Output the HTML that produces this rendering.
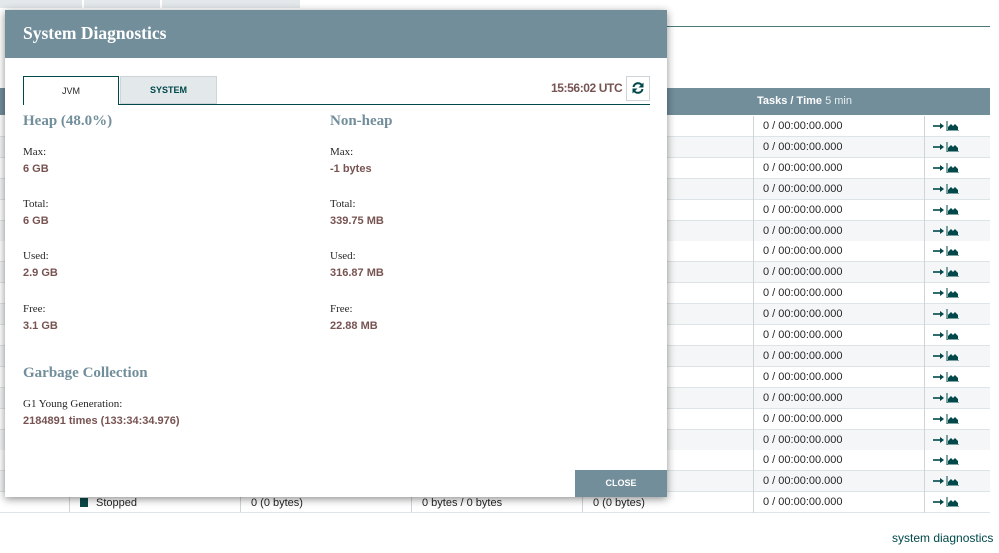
<!DOCTYPE html>
<html><head><style>
*{margin:0;padding:0;box-sizing:border-box}
body{width:999px;height:553px;overflow:hidden;background:#fff;font-family:"Liberation Sans",sans-serif;position:relative}
.abs{position:absolute}
.row{position:absolute;left:0;width:990px;height:21px;border-bottom:1px solid #dde4e7;font-size:11px;color:#262626}
.row span{position:absolute;top:4px}
.row .c{position:absolute;top:0;height:21px;border-left:1px solid #cdd5d9}
.lab{position:absolute;font-family:"Liberation Serif",serif;font-size:11px;color:#262626}
.val{position:absolute;font-size:11px;font-weight:bold;color:#775351}
.h{position:absolute;font-family:"Liberation Serif",serif;font-weight:bold;font-size:15px;color:#728e9b}
.ic{position:absolute;width:26px;height:10px}
</style></head><body>
<div class="abs" style="left:0;top:0;width:300px;height:8px;background:#e3e8eb"></div>
<div class="abs" style="left:82px;top:0;width:2px;height:8px;background:#fff"></div>
<div class="abs" style="left:160px;top:0;width:2px;height:8px;background:#fff"></div>
<div class="abs" style="left:300px;top:26px;width:690px;height:1px;background:#4b7a7d"></div>
<div class="abs" style="left:0;top:88px;width:990px;height:27px;background:#728e9b"></div>
<div class="abs" style="left:757px;top:95px;font-size:11px;color:#fff;font-weight:bold">Tasks / Time <span style="font-weight:normal;color:#e8eef0">5 min</span></div>
<div id="rows"></div>
<script>
var h='';for(var i=0;i<19;i++){var y=116+i*20.9;var bg=i%2?'#f4f6f7':'#fff';
h+='<div class="row" style="top:'+y+'px;background:'+bg+'"><div class="c" style="left:753px"></div><div class="c" style="left:924px"></div><span style="left:763px">0 / 00:00:00.000</span>'+
'<svg class="ic" style="left:933px;top:5px" viewBox="0 0 26 10"><path d="M0 5h8" stroke="#004849" stroke-width="1.6"/><path d="M7 2l4 3-4 3z" fill="#004849"/><path d="M14 0v10h12" stroke="#004849" stroke-width="1" fill="none"/><path d="M15 9V6l3-3 2 2 2-2 3 3v3z" fill="#004849"/></svg></div>';}
document.getElementById('rows').innerHTML=h;
</script>
<div class="abs" style="left:0;top:492px;width:753px;height:20px;background:#fff;font-size:11px;color:#262626">
<div class="abs" style="left:69px;top:0;height:20px;border-left:1px solid #cdd5d9"></div>
<div class="abs" style="left:80px;top:6px;width:8px;height:9px;background:#0b4a4a"></div>
<span class="abs" style="left:96px;top:5px">Stopped</span>
<div class="abs" style="left:240px;top:0;height:20px;border-left:1px solid #cdd5d9"></div>
<span class="abs" style="left:251px;top:5px">0 (0 bytes)</span>
<div class="abs" style="left:411px;top:0;height:20px;border-left:1px solid #cdd5d9"></div>
<span class="abs" style="left:422px;top:5px">0 bytes / 0 bytes</span>
<div class="abs" style="left:582px;top:0;height:20px;border-left:1px solid #cdd5d9"></div>
<span class="abs" style="left:593px;top:5px">0 (0 bytes)</span>
</div>
<div class="abs" style="left:892px;top:531px;font-size:12px;color:#004849">system diagnostics</div>

<div class="abs" style="left:5px;top:10px;width:662px;height:487px;background:#fff;box-shadow:0 2px 8px rgba(0,0,0,.45)">
<div class="abs" style="left:0;top:0;width:662px;height:48px;background:#728e9b"></div>
<div class="abs" style="left:18px;top:13px;font-family:'Liberation Serif',serif;font-weight:bold;font-size:17.5px;color:#fff">System Diagnostics</div>
<div class="abs" style="left:18px;top:66px;width:96px;height:29px;border:1px solid #004849;border-bottom:none;background:#fff;font-size:9px;color:#262626;text-align:center;line-height:28px">JVM</div>
<div class="abs" style="left:115px;top:66px;width:97px;height:28px;border:1px solid #cdd5d9;background:#e3e8eb;font-size:9px;color:#004849;text-align:center;line-height:27px;font-weight:bold">SYSTEM</div>
<div class="abs" style="left:113px;top:94px;width:532px;height:1px;background:#004849"></div>
<div class="abs" style="left:546px;top:71px;font-size:12px;font-weight:bold;color:#775351;letter-spacing:-0.4px">15:56:02 UTC</div>
<div class="abs" style="left:621px;top:66px;width:24px;height:25px;border:1px solid #cdd5d9;background:#fff"></div>
<svg class="abs" style="left:626px;top:71px" width="14" height="14" viewBox="0 0 14 14"><path d="M2.5 6A4.6 4.6 0 0 1 11 4.5" stroke="#004849" stroke-width="2" fill="none"/><path d="M12.5 1.5v5h-5z" fill="#004849"/><path d="M11.5 8A4.6 4.6 0 0 1 3 9.5" stroke="#004849" stroke-width="2" fill="none"/><path d="M1.5 12.5v-5h5z" fill="#004849"/></svg>
<div class="h" style="left:18px;top:103px">Heap (48.0%)</div>
<div class="h" style="left:325px;top:103px">Non-heap</div>
<div class="lab" style="left:18px;top:136px">Max:</div><div class="val" style="left:18px;top:153px">6 GB</div>
<div class="lab" style="left:18px;top:188px">Total:</div><div class="val" style="left:18px;top:205px">6 GB</div>
<div class="lab" style="left:18px;top:240px">Used:</div><div class="val" style="left:18px;top:257px">2.9 GB</div>
<div class="lab" style="left:18px;top:293px">Free:</div><div class="val" style="left:18px;top:310px">3.1 GB</div>
<div class="lab" style="left:325px;top:136px">Max:</div><div class="val" style="left:325px;top:153px">-1 bytes</div>
<div class="lab" style="left:325px;top:188px">Total:</div><div class="val" style="left:325px;top:205px">339.75 MB</div>
<div class="lab" style="left:325px;top:240px">Used:</div><div class="val" style="left:325px;top:257px">316.87 MB</div>
<div class="lab" style="left:325px;top:293px">Free:</div><div class="val" style="left:325px;top:310px">22.88 MB</div>
<div class="h" style="left:18px;top:355px">Garbage Collection</div>
<div class="lab" style="left:18px;top:388px">G1 Young Generation:</div>
<div class="val" style="left:18px;top:405px">2184891 times (133:34:34.976)</div>
<div class="abs" style="left:570px;top:460px;width:92px;height:27px;background:#728e9b;color:#fff;font-size:9px;text-align:center;line-height:27px;font-weight:bold">CLOSE</div>
</div>
</body></html>
